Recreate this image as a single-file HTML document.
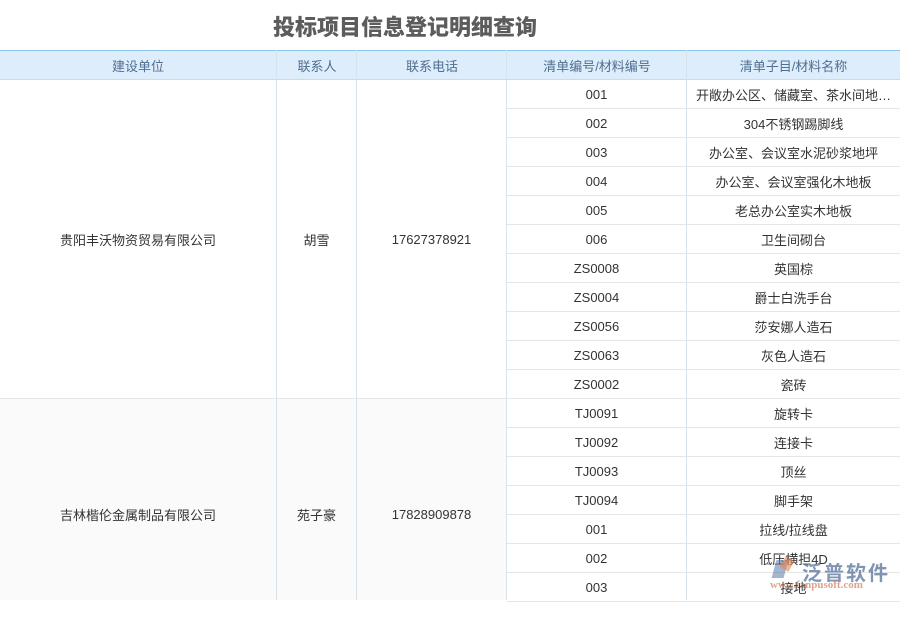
<!DOCTYPE html>
<html><head><meta charset="utf-8"><style>
*{margin:0;padding:0;box-sizing:border-box}
body{width:900px;height:600px;overflow:hidden;background:#fff;font-family:"Liberation Sans","Noto Sans CJK SC",sans-serif;position:relative;color:#333;font-size:13px}
.title{position:absolute;left:0;width:810px;top:10px;text-align:center;font-size:22px;font-weight:900;color:#5c5c5c}
.hd{position:absolute;top:50px;left:0;width:900px;height:30px;background:#deedfb;border-top:1px solid #8fc3ea;border-bottom:1px solid #c9dced}
.c{position:absolute;display:flex;align-items:center;justify-content:center;white-space:nowrap;overflow:hidden}
.hc{color:#4f6f90;height:29px}
.vl{position:absolute;width:1px;background:#e3e3e3}
.hl{position:absolute;height:1px;background:#e6e6e6}
.wm{position:absolute;right:10px;top:557px;font-size:20px;color:rgba(60,90,140,.65);font-weight:bold;letter-spacing:2px}
.wm2{position:absolute;left:770px;top:579px;font-size:11px;color:rgba(200,100,60,.6);font-family:"Liberation Serif",serif;font-weight:bold}
</style></head><body>
<div class="title">投标项目信息登记明细查询</div>
<div class="hd">
<div class="c hc" style="left:0;width:276px">建设单位</div>
<div class="c hc" style="left:277px;width:80px">联系人</div>
<div class="c hc" style="left:357px;width:150px">联系电话</div>
<div class="c hc" style="left:507px;width:180px">清单编号/材料编号</div>
<div class="c hc" style="left:687px;width:213px">清单子目/材料名称</div>
</div>
<div style="position:absolute;left:0;top:399px;width:507px;height:201px;background:#fafafa"></div>
<div class="vl" style="left:276px;top:50px;height:550px;background:#d6e2ee"></div>
<div class="vl" style="left:356px;top:50px;height:550px;background:#d6e2ee"></div>
<div class="vl" style="left:506px;top:50px;height:550px;background:#d6e2ee"></div>
<div class="vl" style="left:686px;top:50px;height:550px;background:#d6e2ee"></div>
<div class="hl" style="left:0;width:900px;top:398px"></div>
<div class="c" style="left:0;width:276px;top:80px;height:318px">贵阳丰沃物资贸易有限公司</div>
<div class="c" style="left:277px;width:79px;top:80px;height:318px">胡雪</div>
<div class="c" style="left:357px;width:149px;top:80px;height:318px">17627378921</div>
<div class="c" style="left:0;width:276px;top:399px;height:230px">吉林楷伦金属制品有限公司</div>
<div class="c" style="left:277px;width:79px;top:399px;height:230px">苑子豪</div>
<div class="c" style="left:357px;width:149px;top:399px;height:230px">17828909878</div>
<div id="rows"></div>
<div style="position:absolute;left:772px;top:558px;width:22px;height:22px;">
<div style="position:absolute;left:2px;top:2px;width:12px;height:18px;background:rgba(90,120,170,.55);transform:skewX(-15deg)"></div>
<div style="position:absolute;left:10px;top:0px;width:10px;height:12px;background:rgba(230,130,80,.6);transform:rotate(30deg)"></div>
</div>
<div class="wm">泛普软件</div>
<div class="wm2">www.fanpusoft.com</div>
<script>
var d=[["001","开敞办公区、储藏室、茶水间地…"],["002","304不锈钢踢脚线"],["003","办公室、会议室水泥砂浆地坪"],["004","办公室、会议室强化木地板"],["005","老总办公室实木地板"],["006","卫生间砌台"],["ZS0008","英国棕"],["ZS0004","爵士白洗手台"],["ZS0056","莎安娜人造石"],["ZS0063","灰色人造石"],["ZS0002","瓷砖"],["TJ0091","旋转卡"],["TJ0092","连接卡"],["TJ0093","顶丝"],["TJ0094","脚手架"],["001","拉线/拉线盘"],["002","低压横担4D"],["003","接地"]];
var h="";
for(var i=0;i<d.length;i++){var t=80+i*29;
h+='<div class="c" style="left:507px;width:179px;top:'+t+'px;height:29px">'+d[i][0]+'</div>';
h+='<div class="c" style="left:687px;width:213px;top:'+t+'px;height:29px">'+d[i][1]+'</div>';
if(i!=10)h+='<div class="hl" style="left:507px;width:393px;top:'+(t+28)+'px"></div>';}
document.getElementById("rows").innerHTML=h;
</script>
</body></html>
